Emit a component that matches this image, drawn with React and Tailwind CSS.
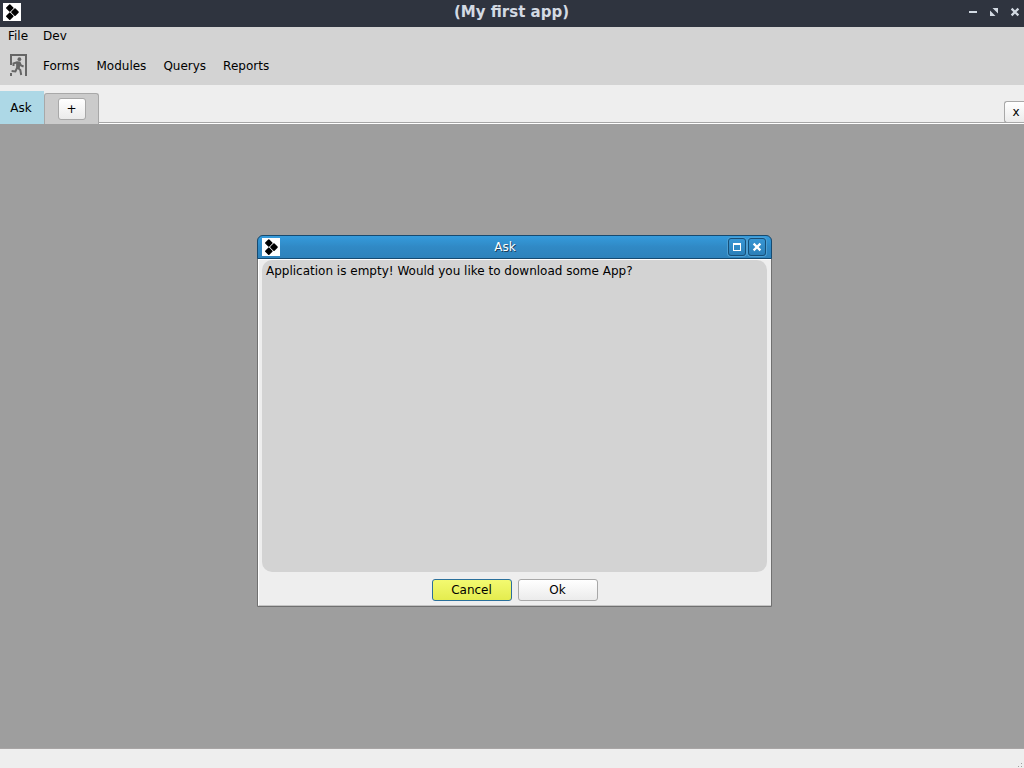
import React from "react";

function AppLogo() {
  return (
    <svg width="18" height="18" viewBox="0 0 18 18" aria-hidden="true" className="block shrink-0">
      <rect width="18" height="18" fill="#ffffff" />
      <g fill="#000000" stroke="#000000" strokeWidth="1.6" strokeLinejoin="round">
        <path d="M6.8 2 9.8 5 6.8 8 3.8 5Z" />
        <path d="M12 6.1 15 9.1 12 12.1 9 9.1Z" />
        <path d="M6.8 10.2 9.8 13.2 6.8 16.2 3.8 13.2Z" />
      </g>
    </svg>
  );
}

function ExitIcon() {
  return (
    <svg width="18" height="24" viewBox="0 0 18 24" aria-hidden="true" className="block">
      <path d="M2 12V2H17V23" fill="none" stroke="#666666" strokeWidth="2" />
      <path d="M1 20H3V23H1Z" fill="#666666" />
      <circle cx="10.4" cy="6.2" r="1.9" fill="#666666" />
      <path
        d="M4.5 13V10.5L8 9.3L10.5 9.5L12 12.5L14.6 13.5M9.5 10L8.4 14.5L11.3 17L12.2 22M8 15L6.4 18.4L2.6 18"
        fill="none"
        stroke="#666666"
        strokeWidth="2"
      />
      <path d="M7 9L11.4 9.3L10.8 15.4L7.3 15Z" fill="#666666" />
    </svg>
  );
}

function MinimizeIcon() {
  return (
    <svg width="10" height="10" viewBox="0 0 10 10" aria-hidden="true">
      <path d="M1 4H9V6H1Z" fill="#d3dae3" />
    </svg>
  );
}

function RestoreIcon() {
  return (
    <svg width="10" height="10" viewBox="0 0 10 10" aria-hidden="true">
      <path d="M3.5 1H9V6.5ZM1 3.5L6.5 9H1Z" fill="#d3dae3" />
    </svg>
  );
}

function CrossIcon({ color }) {
  return (
    <svg width="10" height="10" viewBox="0 0 10 10" aria-hidden="true">
      <path d="M1.6 1.6L8.4 8.4M8.4 1.6L1.6 8.4" stroke={color} strokeWidth="2.2" />
    </svg>
  );
}

function FrameButton({ label, children }) {
  return (
    <button
      type="button"
      aria-label={label}
      className="flex h-[18px] w-[18px] items-center justify-center rounded-[3px] border border-[#174f77] bg-linear-to-b from-[#3796d4] to-[#2b7fb8] shadow-[0_0_0_1px_#4c9fd3]"
    >
      {children}
    </button>
  );
}

const buttonStyle = "rounded-[3px] border border-[#a8a8a8] bg-linear-to-b from-white to-[#ebebeb]";

export default function App() {
  return (
    <div className="flex min-h-screen flex-col bg-[#eeeeee] font-['DejaVu_Sans',sans-serif] text-[12px] leading-4 text-black">
      <header className="grid h-[27px] grid-cols-[1fr_auto_1fr] items-center bg-[#2f343f] pb-[3px] pl-[3px] pr-1">
        <AppLogo />
        <h1 className="text-[15px] font-bold text-[#d3dae3]">(My first app)</h1>
        <div className="flex justify-end gap-[11px]">
          <button type="button" aria-label="Minimize"><MinimizeIcon /></button>
          <button type="button" aria-label="Restore"><RestoreIcon /></button>
          <button type="button" aria-label="Close"><CrossIcon color="#d3dae3" /></button>
        </div>
      </header>

      <div className="bg-[#d3d3d3]">
        <nav className="flex h-[18px] items-center gap-[15px] px-2">
          <button type="button">File</button>
          <button type="button">Dev</button>
        </nav>
        <div className="flex h-10 items-center gap-[17px] px-[9px] pt-[2px]">
          <button type="button" aria-label="Exit" className="-mr-px pb-[2px]"><ExitIcon /></button>
          <button type="button">Forms</button>
          <button type="button">Modules</button>
          <button type="button">Querys</button>
          <button type="button">Reports</button>
        </div>
      </div>

      <div className="flex h-[39px] items-end">
        <button type="button" className="h-[33px] w-11 bg-[#add8e6] pr-[2px]">Ask</button>
        <div className="flex h-[31px] w-[55px] items-center justify-center rounded-t-[3px] border border-b-0 border-[#a8a8a8] bg-[#cbcbcb]">
          <button type="button" aria-label="New tab" className={"h-[22px] w-7 " + buttonStyle}>+</button>
        </div>
        <div className="h-full flex-1 border-b border-white">
          <div className="flex h-full items-end justify-end border-b border-[#a5a5a5]">
            <button type="button" aria-label="Close tab" className="-mb-px h-[22px] w-5 rounded-l-[3px] border border-r-0 border-[#a8a8a8] bg-linear-to-b from-white to-[#ebebeb] pl-[3px]">
              x
            </button>
          </div>
        </div>
      </div>

      <main className="relative flex-1 bg-[#9e9e9e]">
        <section
          role="dialog"
          aria-labelledby="ask-title"
          className="absolute left-[257px] top-[111px] w-[515px] rounded-t-[6px] border border-[#707070] bg-[#eeeeee]"
        >
          <div className="-mx-px -mt-px grid h-6 grid-cols-[1fr_auto_1fr] items-center rounded-t-[6px] border border-[#164a70] bg-linear-to-b from-[#359bdc] via-[#3089c5] to-[#2d82bb] pl-1 pr-[5px]">
            <AppLogo />
            <h2 id="ask-title" className="mr-[18px] text-white [text-shadow:1px_1px_0_#1c3f58]">Ask</h2>
            <div className="flex justify-end gap-[2px]">
              <FrameButton label="Maximize">
                <svg width="10" height="10" viewBox="0 0 10 10" aria-hidden="true">
                  <path d="M1 1H9V9H1ZM2 3V8H8V3Z" fill="#ffffff" fillRule="evenodd" />
                </svg>
              </FrameButton>
              <FrameButton label="Close dialog"><CrossIcon color="#ffffff" /></FrameButton>
            </div>
          </div>
          <div className="border-b border-l border-t border-b-[#c4c4c4] border-l-white border-t-white pb-1 pl-[3px] pr-1">
            <p className="min-h-[312px] rounded-[10px] bg-[#d3d3d3] px-1 py-[3px]">
              Application is empty! Would you like to download some App?
            </p>
            <div className="flex justify-center gap-[6px] pt-[7px]">
              <button type="button" className="h-[22px] w-20 rounded-[3px] border border-[#2b709b] bg-linear-to-b from-[#f3fa70] to-[#e4ec4e]">
                Cancel
              </button>
              <button type="button" className={"h-[22px] w-20 " + buttonStyle}>Ok</button>
            </div>
          </div>
        </section>
      </main>

      <footer className="flex h-5 items-end justify-end border-t border-[#a8a5a5] bg-[#eeeeee]">
        <svg width="6" height="6" viewBox="0 0 6 6" aria-hidden="true">
          <path d="M0 4H1V5H0ZM3 4H4V5H3ZM3 1H4V2H3Z" fill="#a0a0a0" />
        </svg>
      </footer>
    </div>
  );
}
